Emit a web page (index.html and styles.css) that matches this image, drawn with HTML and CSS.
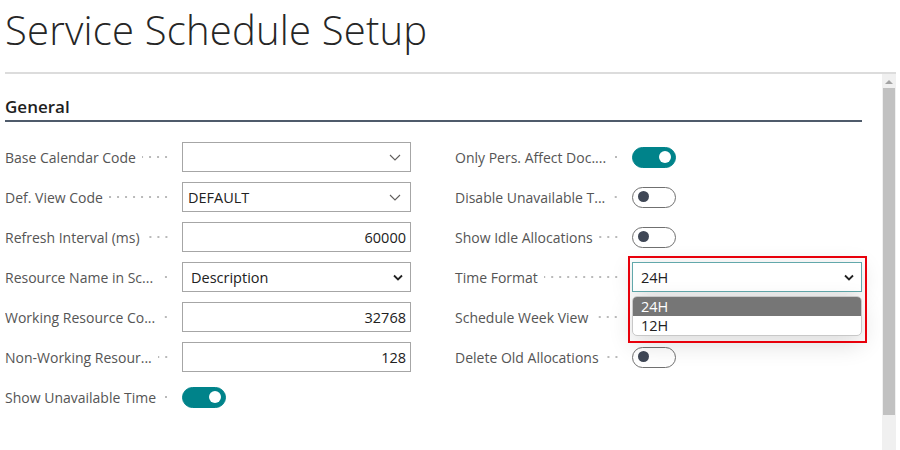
FILE: index.html
```html
<!DOCTYPE html>
<html>
<head>
<meta charset="utf-8">
<link rel="stylesheet" href="styles.css">
</head>
<body>
<div class="page">
  <h1 class="title">Service Schedule Setup</h1>
  <div class="body">
    <div class="main">
      <div class="section-head">General</div>
      <div class="columns">
        <div class="col">
          <div class="field">
            <div class="label"><span class="text">Base Calendar Code</span><span class="dots"></span></div>
            <div class="input lookup"><span class="value"></span>
              <svg class="chev-thin" width="12" height="7" viewBox="0 0 12 7"><path d="M1 1l5 5 5-5" fill="none" stroke="#605e5c" stroke-width="1.1"/></svg>
            </div>
          </div>
          <div class="field">
            <div class="label"><span class="text">Def. View Code</span><span class="dots"></span></div>
            <div class="input lookup"><span class="value">DEFAULT</span>
              <svg class="chev-thin" width="12" height="7" viewBox="0 0 12 7"><path d="M1 1l5 5 5-5" fill="none" stroke="#605e5c" stroke-width="1.1"/></svg>
            </div>
          </div>
          <div class="field">
            <div class="label"><span class="text">Refresh Interval (ms)</span><span class="dots"></span></div>
            <div class="input num"><span class="value">60000</span></div>
          </div>
          <div class="field">
            <div class="label"><span class="text">Resource Name in Sc...</span><span class="dots"></span></div>
            <div class="input select"><span class="value">Description</span>
              <svg class="chev-bold" width="10" height="7" viewBox="0 0 10 7"><path d="M1 1.5l4 4 4-4" fill="none" stroke="#222" stroke-width="1.8"/></svg>
            </div>
          </div>
          <div class="field">
            <div class="label"><span class="text">Working Resource Co...</span><span class="dots"></span></div>
            <div class="input num"><span class="value">32768</span></div>
          </div>
          <div class="field">
            <div class="label"><span class="text">Non-Working Resour...</span><span class="dots"></span></div>
            <div class="input num"><span class="value">128</span></div>
          </div>
          <div class="field">
            <div class="label"><span class="text">Show Unavailable Time</span><span class="dots"></span></div>
            <div class="toggle on"><span class="knob"></span></div>
          </div>
        </div>
        <div class="col">
          <div class="field">
            <div class="label"><span class="text">Only Pers. Affect Doc....</span><span class="dots"></span></div>
            <div class="toggle on"><span class="knob"></span></div>
          </div>
          <div class="field">
            <div class="label"><span class="text">Disable Unavailable T...</span><span class="dots"></span></div>
            <div class="toggle"><span class="knob"></span></div>
          </div>
          <div class="field">
            <div class="label"><span class="text">Show Idle Allocations</span><span class="dots"></span></div>
            <div class="toggle"><span class="knob"></span></div>
          </div>
          <div class="field">
            <div class="label"><span class="text">Time Format</span><span class="dots"></span></div>
            <div class="popup-wrap">
              <div class="input select focus"><span class="value">24H</span>
                <svg class="chev-bold" width="10" height="7" viewBox="0 0 10 7"><path d="M1 1.5l4 4 4-4" fill="none" stroke="#222" stroke-width="1.8"/></svg>
              </div>
              <div class="listbox">
                <div class="opt sel">24H</div>
                <div class="opt">12H</div>
              </div>
              <div class="highlight"></div>
            </div>
          </div>
          <div class="field">
            <div class="label"><span class="text">Schedule Week View</span><span class="dots"></span></div>
            <div class="toggle"><span class="knob"></span></div>
          </div>
          <div class="field">
            <div class="label"><span class="text">Delete Old Allocations</span><span class="dots"></span></div>
            <div class="toggle"><span class="knob"></span></div>
          </div>
        </div>
      </div>
    </div>
    <div class="scrollbar">
      <div class="arrow"></div>
      <div class="thumb"></div>
    </div>
  </div>
</div>
</body>
</html>
```
FILE: styles.css
```css
html, body {
  margin: 0;
  padding: 0;
  background: #fff;
}
body {
  font-family: "Open Sans", "Noto Sans", sans-serif;
  width: 900px;
  height: 450px;
  overflow: hidden;
}
.page {
  padding: 0 4px 0 5px;
}
.title {
  margin: 0;
  height: 72px;
  box-sizing: border-box;
  padding-top: 3px;
  font-weight: 300;
  font-size: 40px;
  line-height: 54px;
  color: #262626;
  letter-spacing: 0.2px;
}
.body {
  display: flex;
  height: 378px;
  border-top: 2px solid #dcdcdc;
}
.main {
  flex: 1;
  padding-right: 20px;
  overflow: hidden;
}
.section-head {
  margin-top: 20px;
  font-size: 17px;
  font-weight: 600;
  line-height: 26px;
  color: #1e1e1e;
  border-bottom: 2px solid #4f5b6b;
}
.columns {
  margin-top: 20px;
  display: grid;
  grid-template-columns: 406px 407px;
  column-gap: 44px;
}
.col {
  display: flex;
  flex-direction: column;
  gap: 10px;
}
.field {
  display: grid;
  grid-template-columns: 177px 1fr;
  height: 30px;
  align-items: center;
}
.label {
  display: flex;
  align-items: center;
  min-width: 0;
  padding-right: 12px;
}
.label .text {
  font-size: 14px;
  color: #555555;
  white-space: nowrap;
}
.dots {
  flex: 1;
  min-width: 8px;
  height: 4px;
  margin-left: 6px;
  background-image: radial-gradient(circle, #b8b8b8 0.7px, transparent 1.1px);
  background-size: 8px 4px;
  background-repeat: repeat-x;
  background-position: right center;
}
.input {
  position: relative;
  box-sizing: border-box;
  height: 30px;
  width: 229px;
  border: 1px solid #a6a6a6;
  display: flex;
  align-items: center;
  padding: 0 4px 0 5px;
  font-size: 14.5px;
  color: #212121;
  background: #fff;
}
.input .value {
  flex: 1;
}
.input.num .value {
  text-align: right;
}
.input.select {
  padding-left: 8px;
}
.chev-thin {
  margin-right: 5px;
}
.chev-bold {
  margin-right: 3px;
}
.toggle {
  position: relative;
  box-sizing: border-box;
  width: 44px;
  height: 21px;
  border-radius: 11px;
  border: 1.3px solid #707070;
  background: #fff;
}
.toggle .knob {
  position: absolute;
  top: 3.7px;
  left: 5px;
  width: 11px;
  height: 11px;
  border-radius: 50%;
  background: #3f4756;
}
.toggle.on {
  background: #00838a;
  border-color: #00838a;
}
.toggle.on .knob {
  left: auto;
  right: 4px;
  top: 3px;
  width: 12px;
  height: 12px;
  background: #fff;
}
.popup-wrap {
  position: relative;
  width: 230px;
  height: 30px;
}
.input.focus {
  width: 230px;
  border-color: #62a8ab;
  box-shadow: 0 4px 22px rgba(0,0,0,0.13);
}
.listbox {
  position: absolute;
  left: 0;
  top: 34px;
  width: 230px;
  box-sizing: border-box;
  border: 1px solid #c8c8c8;
  border-radius: 5px;
  overflow: hidden;
  background: #fff;
  box-shadow: 0 8px 24px rgba(0,0,0,0.14);
  z-index: 2;
}
.opt {
  height: 19px;
  line-height: 19px;
  padding-left: 8px;
  font-size: 14.5px;
  color: #212121;
}
.opt.sel {
  background: #767676;
  color: #fff;
}
.highlight {
  position: absolute;
  left: -4px;
  top: -6px;
  width: 239px;
  height: 87px;
  box-sizing: border-box;
  border: 2px solid #e8000b;
  z-index: 3;
}
.scrollbar {
  width: 14px;
  background: #f0f0f0;
  display: flex;
  flex-direction: column;
  align-items: center;
}
.arrow {
  height: 14px;
  width: 14px;
  display: flex;
  align-items: center;
  justify-content: center;
}
.arrow::before {
  content: "";
  border-left: 4px solid transparent;
  border-right: 4px solid transparent;
  border-bottom: 4px solid #a3a3a3;
  margin-top: 2px;
}
.thumb {
  width: 12px;
  height: 327px;
  background: #c1c1c1;
}
```
